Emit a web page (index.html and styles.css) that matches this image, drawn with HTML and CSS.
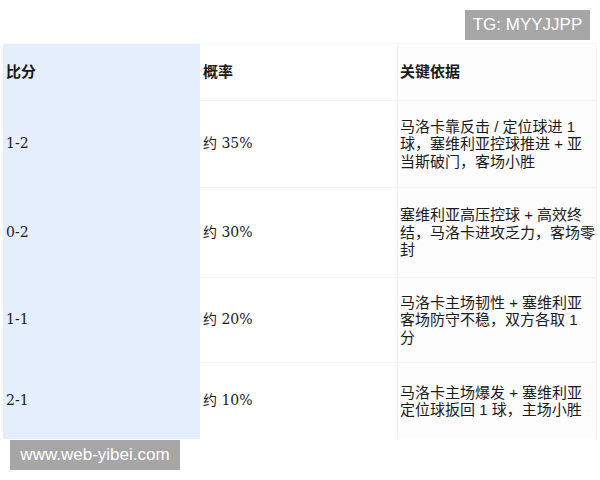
FILE: index.html
```html
<!DOCTYPE html>
<html lang="zh">
<head>
<meta charset="utf-8">
<link rel="stylesheet" href="styles.css">
</head>
<body>
<div class="page">
  <div class="table">
    <div class="cell c1 head">比分</div>
    <div class="cell c2 head">概率</div>
    <div class="cell c3 head">关键依据</div>

    <div class="cell c1 num">1-2</div>
    <div class="cell c2 num">约 35%</div>
    <div class="cell c3">马洛卡靠反击 / 定位球进 1 球，塞维利亚控球推进 + 亚当斯破门，客场小胜</div>

    <div class="cell c1 num">0-2</div>
    <div class="cell c2 num">约 30%</div>
    <div class="cell c3">塞维利亚高压控球 + 高效终结，马洛卡进攻乏力，客场零封</div>

    <div class="cell c1 num">1-1</div>
    <div class="cell c2 num">约 20%</div>
    <div class="cell c3">马洛卡主场韧性 + 塞维利亚客场防守不稳，双方各取 1 分</div>

    <div class="cell c1 num last">2-1</div>
    <div class="cell c2 num last">约 10%</div>
    <div class="cell c3 last">马洛卡主场爆发 + 塞维利亚定位球扳回 1 球，主场小胜</div>
  </div>
  <div class="mark mark-top">TG: MYYJJPP</div>
  <div class="mark mark-bottom">www.web-yibei.com</div>
</div>
</body>
</html>
```

FILE: styles.css
```css
html, body {
  margin: 0;
  padding: 0;
  background: #ffffff;
}
.page {
  position: relative;
  width: 600px;
  height: 480px;
  padding: 43px 3px 0 3px;
  box-sizing: border-box;
}
.table {
  display: grid;
  grid-template-columns: 197px 197px 200px;
  grid-template-rows: 57px 87px 90px 85px 76px;
  border-top: 1px solid #f6f6f6;
  color: #1a1a1a;
}
.cell {
  display: flex;
  align-items: center;
  padding: 0 3px;
  box-sizing: border-box;
  font-family: "Liberation Sans", "Noto Sans CJK SC", sans-serif;
  font-size: 15px;
  line-height: 17.5px;
  border-bottom: 1px solid #f4f4f4;
}
.c1 {
  background: #e4eefc;
  border-bottom-color: #e4eefc;
}
.c2 {
  background: #ffffff;
}
.c3 {
  background: #fdfdfd;
  border-left: 1px solid #f2f2f2;
  border-right: 1px solid #f4f4f4;
  padding-left: 2px;
  padding-right: 0;
}
.head {
  font-weight: bold;
  font-size: 15px;
}
.num {
  font-family: "DejaVu Serif", "Noto Sans CJK SC", serif;
  font-size: 14px;
}
.last {
  border-bottom: none;
}
.mark {
  position: absolute;
  background: #a6a6a6;
  color: #ffffff;
  font-family: "Liberation Sans", Arial, sans-serif;
  display: flex;
  align-items: center;
  justify-content: center;
  height: 30px;
}
.mark-top {
  left: 465px;
  top: 10px;
  width: 125px;
  font-size: 17px;
}
.mark-bottom {
  left: 10px;
  top: 440px;
  width: 170px;
  font-size: 17px;
}
```
